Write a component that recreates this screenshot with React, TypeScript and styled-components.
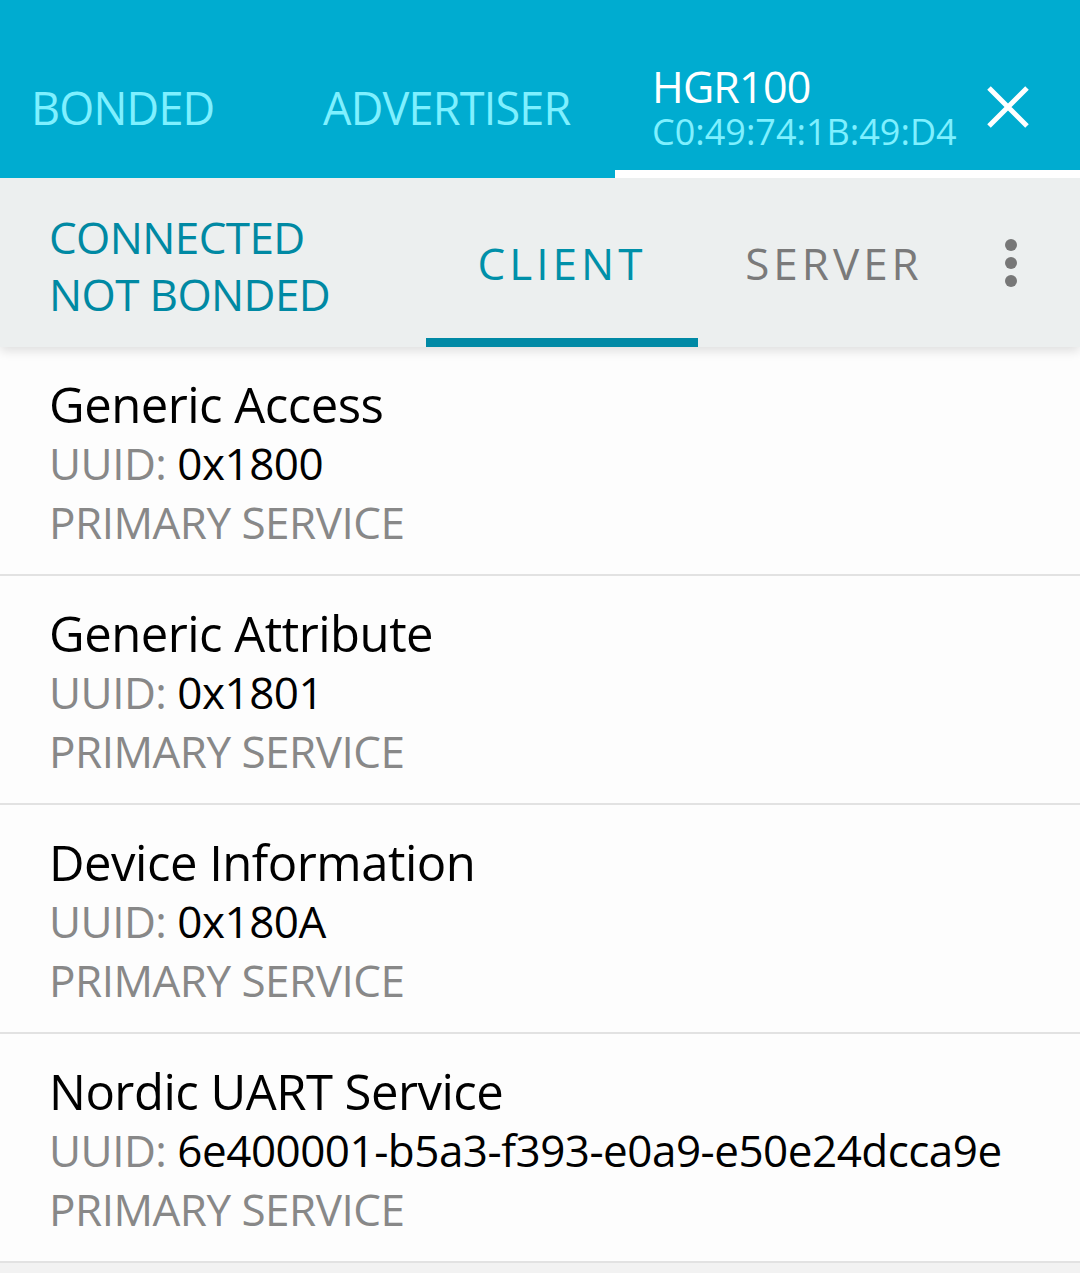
import React from "react";
import styled, { createGlobalStyle } from "styled-components";

const Global = createGlobalStyle`
  html, body { margin: 0; padding: 0; background: #f2f2f2; }
  body { font-family: "Open Sans", "Noto Sans", sans-serif; }
  * { box-sizing: border-box; }
`;

const Page = styled.div`
  width: 1080px;
  min-height: 1273px;
  background: #f2f2f2;
`;

const TopBar = styled.header`
  height: 178px;
  background: #00acd0;
  display: flex;
  align-items: stretch;
  position: relative;
  z-index: 2;
`;

const DeviceTab = styled.div<{ $w?: number; $pl?: number; $active?: boolean }>`
  width: ${(p) => (p.$w ? `${p.$w}px` : "auto")};
  flex: ${(p) => (p.$w ? "none" : "1")};
  padding-left: ${(p) => p.$pl ?? 0}px;
  display: flex;
  align-items: center;
  padding-top: 44px;
  border-bottom: 8px solid ${(p) => (p.$active ? "#ffffff" : "transparent")};
  color: #7ff0ff;
  font-size: 45px;
  letter-spacing: -0.8px;
`;

const DeviceInfo = styled.div`
  display: flex;
  flex-direction: column;
  flex: 1;
  margin-top: 8px;
`;

const DeviceName = styled.div`
  color: #ffffff;
  font-size: 43px;
  line-height: 42px;
`;

const DeviceMac = styled.div`
  color: #7ff0ff;
  font-size: 36px;
  line-height: 48px;
  letter-spacing: 0px;
`;

const CloseBtn = styled.div`
  width: 46px;
  height: 46px;
  margin-right: 49px;
  margin-top: 0;
  display: flex;
  align-items: center;
  justify-content: center;
`;

const SubBar = styled.div`
  height: 169px;
  background: #ecefef;
  display: flex;
  align-items: stretch;
  position: relative;
  z-index: 1;
  box-shadow: 0 4px 10px rgba(0, 0, 0, 0.12);
`;

const Status = styled.div`
  width: 426px;
  padding-left: 49px;
  display: flex;
  flex-direction: column;
  justify-content: center;
  color: #0089a3;
  font-size: 44px;
  line-height: 57px;
  letter-spacing: -0.6px;
  padding-top: 6px;
`;

const SubTab = styled.div<{ $active?: boolean }>`
  width: 272px;
  display: flex;
  align-items: center;
  justify-content: center;
  font-size: 44px;
  letter-spacing: 4px;
  color: ${(p) => (p.$active ? "#0090a9" : "#7a7a7a")};
  border-bottom: 9px solid ${(p) => (p.$active ? "#0089a5" : "transparent")};
  padding-top: 9px;
`;

const MenuBtn = styled.div`
  flex: 1;
  display: flex;
  align-items: center;
  justify-content: flex-start;
  padding-left: 34px;
`;

const List = styled.div`
  background: #fdfdfd;
`;

const Item = styled.div`
  height: 229px;
  padding: 28px 0 0 49px;
  border-bottom: 2px solid #e2e2e2;
  display: flex;
  flex-direction: column;
`;

const Title = styled.div`
  font-size: 49px;
  line-height: 58px;
  color: #000;
  letter-spacing: -0.5px;
`;

const Line = styled.div`
  font-size: 44px;
  line-height: 58px;
  margin-top: 1px;
  color: #888888;
  letter-spacing: -0.5px;
`;

const Value = styled.span`
  color: #000;
`;

const services = [
  { name: "Generic Access", uuid: "0x1800" },
  { name: "Generic Attribute", uuid: "0x1801" },
  { name: "Device Information", uuid: "0x180A" },
  { name: "Nordic UART Service", uuid: "6e400001-b5a3-f393-e0a9-e50e24dcca9e" },
];

export default function App() {
  return (
    <Page>
      <Global />
      <TopBar>
        <DeviceTab $w={323} $pl={31}>BONDED</DeviceTab>
        <DeviceTab $w={292} $pl={0}>ADVERTISER</DeviceTab>
        <DeviceTab $pl={37} $active>
          <DeviceInfo>
            <DeviceName>HGR100</DeviceName>
            <DeviceMac>C0:49:74:1B:49:D4</DeviceMac>
          </DeviceInfo>
          <CloseBtn>
            <svg width="42" height="42" viewBox="0 0 42 42">
              <path d="M2 2 L40 40 M40 2 L2 40" stroke="#fff" strokeWidth="5" />
            </svg>
          </CloseBtn>
        </DeviceTab>
      </TopBar>
      <SubBar>
        <Status>
          <div>CONNECTED</div>
          <div>NOT BONDED</div>
        </Status>
        <SubTab $active>CLIENT</SubTab>
        <SubTab>SERVER</SubTab>
        <MenuBtn>
          <svg width="14" height="50" viewBox="0 0 14 50">
            <circle cx="7" cy="7" r="6" fill="#777" />
            <circle cx="7" cy="25" r="6" fill="#777" />
            <circle cx="7" cy="43" r="6" fill="#777" />
          </svg>
        </MenuBtn>
      </SubBar>
      <List>
        {services.map((s) => (
          <Item key={s.name}>
            <Title>{s.name}</Title>
            <Line>
              UUID: <Value>{s.uuid}</Value>
            </Line>
            <Line>PRIMARY SERVICE</Line>
          </Item>
        ))}
      </List>
    </Page>
  );
}
